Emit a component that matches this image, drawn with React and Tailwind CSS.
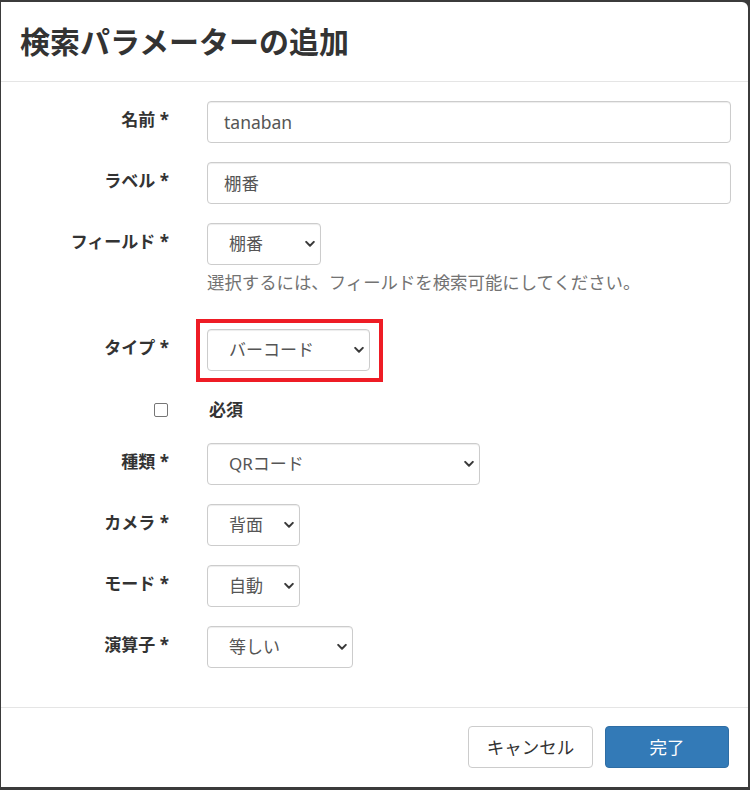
import React from 'react';

const FONT = { fontFamily: '"Noto Sans", "Noto Sans CJK JP", sans-serif' };

function Chevron() {
  return (
    <svg className="pointer-events-none absolute right-[6px] top-1/2 -translate-y-1/2" width="10" height="7" viewBox="0 0 10 7" fill="none">
      <path d="M1.2 1.4l3.8 3.8 3.8-3.8" stroke="#3a3a3a" strokeWidth="2" strokeLinecap="round" strokeLinejoin="round" />
    </svg>
  );
}

function Select({ value, width }) {
  return (
    <div className="relative h-[42px]" style={{ width }}>
      <div className="flex h-full w-full items-center rounded-[4px] border border-[#cccccc] bg-white pl-[21px] text-[17px] text-[#555555] shadow-[inset_0_1px_1px_rgba(0,0,0,0.075)]">
        {value}
      </div>
      <Chevron />
    </div>
  );
}

function TextInput({ value }) {
  return (
    <div className="flex h-[42px] w-full items-center rounded-[4px] border border-[#cccccc] bg-white pl-[16px] text-[17.5px] text-[#555555] shadow-[inset_0_1px_1px_rgba(0,0,0,0.075)]">
      {value}
    </div>
  );
}

function Row({ label, children, className = '' }) {
  return (
    <div className={`flex items-start ${className}`}>
      <div className="w-[168px] shrink-0 pt-[7px] text-right text-[17px] font-bold leading-[24px] text-[#333333]">
        {label} *
      </div>
      <div className="ml-[38px] min-w-0 flex-1">{children}</div>
    </div>
  );
}

export default function App() {
  return (
    <div className="h-[790px] w-[750px] overflow-hidden bg-[#3b3b3b] pl-[1px] pr-[2px] pt-[2px]" style={FONT}>
      <div className="flex h-[785px] flex-col rounded-tr-[6px] bg-white">
        <div className="flex h-[80px] shrink-0 items-center border-b border-[#e5e5e5] pl-[19px]">
          <h4 className="text-[30px] font-bold leading-none text-[#333333]">検索パラメーターの追加</h4>
        </div>

        <div className="flex-1 pr-[17px] pt-[19px]">
          <Row label="名前" className="mb-[19px]">
            <TextInput value="tanaban" />
          </Row>
          <Row label="ラベル" className="mb-[19px]">
            <TextInput value="棚番" />
          </Row>
          <Row label="フィールド">
            <Select value="棚番" width={114} />
            <p className="mt-[4px] text-[17.4px] leading-[26px] text-[#737373]">
              選択するには、フィールドを検索可能にしてください。
            </p>
          </Row>
          <Row label="タイプ" className="mt-[34px]">
            <div className="relative w-[163px]">
              <Select value="バーコード" width={163} />
              <div className="pointer-events-none absolute -bottom-[11px] -left-[11px] -right-[13px] -top-[10px] border-[4px] border-[#ee1c25]" />
            </div>
          </Row>

          <div className="mt-[27px] flex h-[24px] items-center">
            <div className="flex w-[167px] shrink-0 justify-end">
              <span className="h-[14px] w-[14px] rounded-[2px] border border-[#767676] bg-white" />
            </div>
            <span className="ml-[41px] text-[17px] font-bold text-[#333333]">必須</span>
          </div>

          <Row label="種類" className="mb-[19px] mt-[21px]">
            <Select value="QRコード" width={273} />
          </Row>
          <Row label="カメラ" className="mb-[19px]">
            <Select value="背面" width={93} />
          </Row>
          <Row label="モード" className="mb-[19px]">
            <Select value="自動" width={93} />
          </Row>
          <Row label="演算子">
            <Select value="等しい" width={146} />
          </Row>
        </div>

        <div className="flex h-[80px] shrink-0 items-start justify-end gap-[12px] border-t border-[#e5e5e5] pr-[19px] pt-[18px]">
          <button type="button" className="h-[42px] w-[125px] rounded-[4px] border border-[#cccccc] bg-white text-[17.5px] text-[#333333]">
            キャンセル
          </button>
          <button type="button" className="h-[42px] w-[124px] rounded-[4px] border border-[#2e6da4] bg-[#337ab7] text-[17.5px] text-white">
            完了
          </button>
        </div>
      </div>
    </div>
  );
}
